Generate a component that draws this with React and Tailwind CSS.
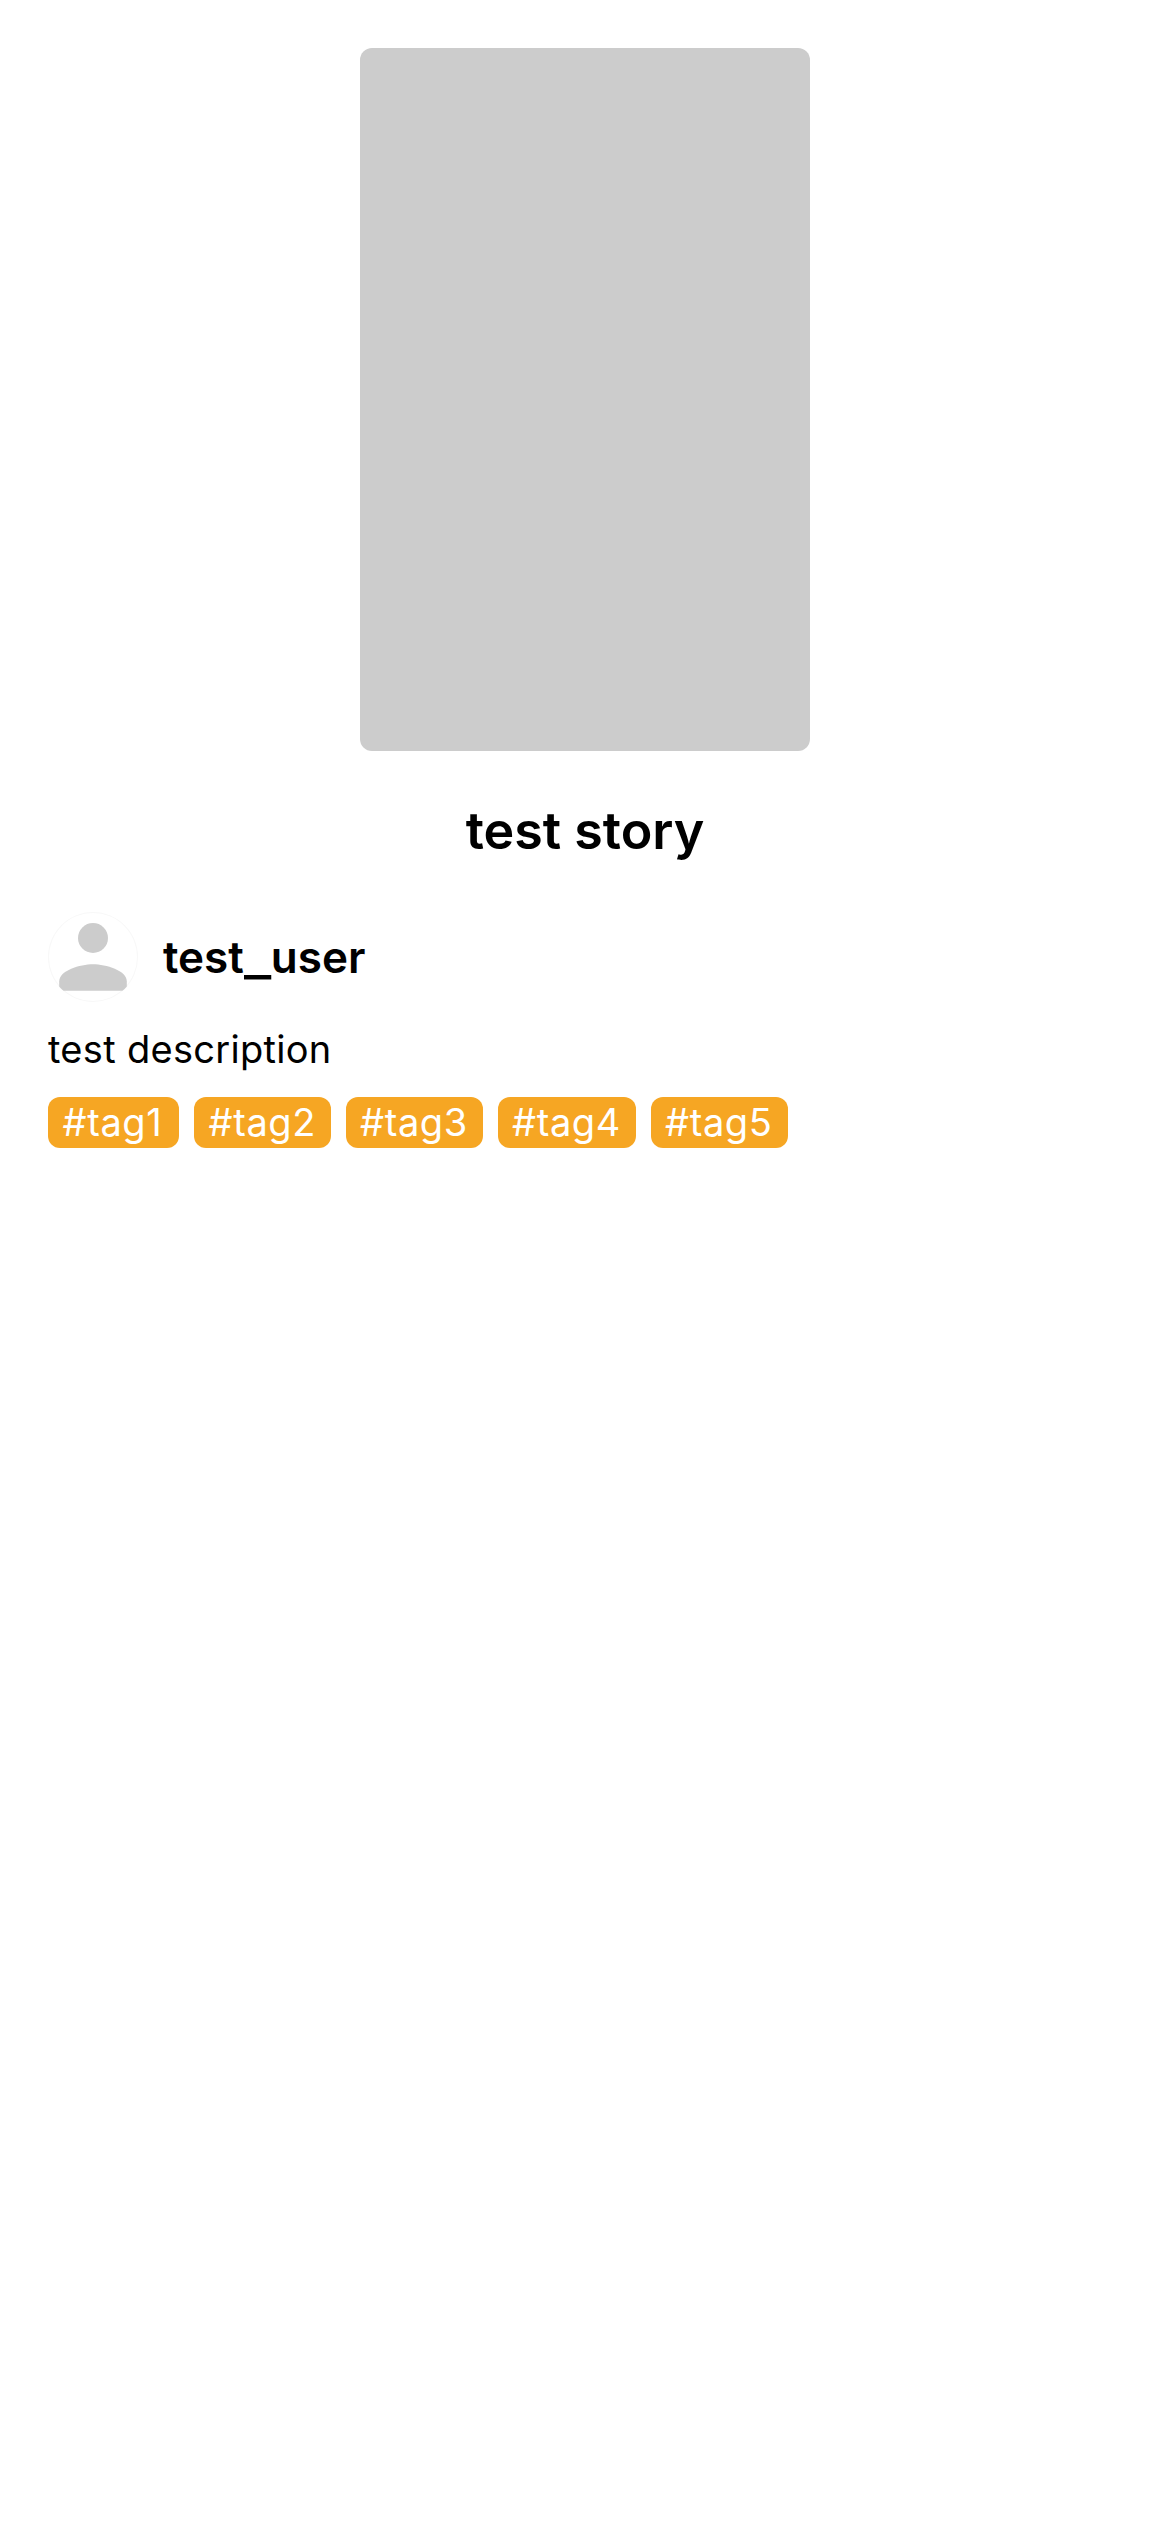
const tags = [
  { label: "#tag1", width: "w-[131px]" },
  { label: "#tag2", width: "w-[136.5px]" },
  { label: "#tag3", width: "w-[137px]" },
  { label: "#tag4", width: "w-[138px]" },
  { label: "#tag5", width: "w-[137px]" },
];

function Avatar() {
  return (
    <div className="size-[90px] shrink-0 overflow-hidden rounded-full ring-1 ring-[#f8f8f8] ring-inset">
      <svg viewBox="0 0 90 90" className="size-full fill-[#cccccc]">
        <circle cx="45" cy="26" r="15" />
        <path d="M11.2 78.7V69.5C11.2 58.5 32 52.3 45 52.3S78.8 58.5 78.8 69.5V78.7Z" />
      </svg>
    </div>
  );
}

export default function App() {
  return (
    <main className="flex min-h-[2532px] w-full flex-col bg-white px-12 pt-12 font-['Inter',sans-serif] text-black">
      <div className="h-[703px] w-[450px] self-center rounded-xl bg-[#cccccc]" />
      <h1 className="mt-[47px] self-center text-[52px] leading-[66px] font-semibold whitespace-nowrap">test story</h1>
      <div className="mt-12 flex items-center gap-[25px]">
        <Avatar />
        <h2 className="text-[44px] leading-[54px] font-semibold whitespace-nowrap">
          test<span className="inline-block w-[27px] origin-left translate-y-[1.5px] scale-x-[1.32]">_</span>user
        </h2>
      </div>
      <p className="mt-[23px] self-start text-[38px] leading-[48px] tracking-[0.3px]">test description</p>
      <div className="mt-6 flex gap-[15px]">
        {tags.map(({ label, width }) => (
          <span key={label} className={`${width} h-[51px] shrink-0 rounded-xl bg-[#f6a623] pl-[14.5px] text-[38px] leading-[51px] tracking-[0.6px] text-white`}>{label}</span>
        ))}
      </div>
    </main>
  );
}
